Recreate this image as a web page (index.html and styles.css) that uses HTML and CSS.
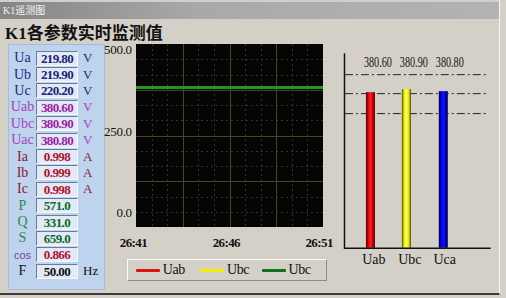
FILE: index.html
```html
<html>
<head>
<title>K1遥测图</title>
<meta charset="utf-8" />
<link rel="stylesheet" href="styles.css">
</head>
<body>
<div class="window">
<div class="titlebar">K1遥测图</div>
<h1>K1各参数实时监测值</h1>

<div class="main">

<div class="panel">
<div class="row volt"><span class="name">Ua</span><span class="val">219.80</span><span class="unit">V</span></div>
<div class="row volt"><span class="name">Ub</span><span class="val">219.90</span><span class="unit">V</span></div>
<div class="row volt"><span class="name">Uc</span><span class="val">220.20</span><span class="unit">V</span></div>
<div class="row line"><span class="name">Uab</span><span class="val">380.60</span><span class="unit">V</span></div>
<div class="row line"><span class="name">Ubc</span><span class="val">380.90</span><span class="unit">V</span></div>
<div class="row line"><span class="name">Uac</span><span class="val">380.80</span><span class="unit">V</span></div>
<div class="row amp"><span class="name">Ia</span><span class="val">0.998</span><span class="unit">A</span></div>
<div class="row amp"><span class="name">Ib</span><span class="val">0.999</span><span class="unit">A</span></div>
<div class="row amp"><span class="name">Ic</span><span class="val">0.998</span><span class="unit">A</span></div>
<div class="row power"><span class="name">P</span><span class="val">571.0</span></div>
<div class="row power"><span class="name">Q</span><span class="val">331.0</span></div>
<div class="row power"><span class="name">S</span><span class="val">659.0</span></div>
<div class="row factor"><span class="name">cos</span><span class="val">0.866</span></div>
<div class="row freq"><span class="name">F</span><span class="val">50.00</span><span class="unit">Hz</span></div>
</div>

<div class="trend">
<div class="plotrow">
<div class="yaxis"><span>500.0</span><span>250.0</span><span>0.0</span></div>
<svg class="plot" width="187" height="183" viewBox="0 0 187 183">
<rect x="0" y="0" width="187" height="183" fill="#050505"/>
<g id="grid"></g>
<line x1="0" y1="43.7" x2="187" y2="43.7" stroke="#e00000" stroke-width="2"/>
<line x1="0" y1="43.5" x2="187" y2="43.5" stroke="#e8e800" stroke-width="2"/>
<line x1="0" y1="43.6" x2="187" y2="43.6" stroke="#1f9a1f" stroke-width="3"/>
</svg>
</div>
<div class="xaxis"><span>26:41</span><span>26:46</span><span>26:51</span></div>
<div class="legend">
<span class="key"><i class="swatch red"></i>Uab</span>
<span class="key"><i class="swatch yellow"></i>Ubc</span>
<span class="key"><i class="swatch green"></i>Ubc</span>
</div>
</div>

<svg class="bars" width="160" height="226" viewBox="0 0 160 226">
<defs>
<linearGradient id="gred" x1="0" x2="1">
<stop offset="0" stop-color="#400"/><stop offset="0.25" stop-color="#d00"/><stop offset="0.5" stop-color="#f22"/><stop offset="0.8" stop-color="#b00"/><stop offset="1" stop-color="#300"/>
</linearGradient>
<linearGradient id="gyel" x1="0" x2="1">
<stop offset="0" stop-color="#440"/><stop offset="0.25" stop-color="#ee0"/><stop offset="0.5" stop-color="#ffff60"/><stop offset="0.8" stop-color="#dd0"/><stop offset="1" stop-color="#330"/>
</linearGradient>
<linearGradient id="gblu" x1="0" x2="1">
<stop offset="0" stop-color="#003"/><stop offset="0.25" stop-color="#00d"/><stop offset="0.5" stop-color="#11f"/><stop offset="0.8" stop-color="#00b"/><stop offset="1" stop-color="#002"/>
</linearGradient>
</defs>
<g stroke="#222" stroke-width="1" stroke-dasharray="8 3 2 3">
<line x1="6" y1="30.5" x2="150" y2="30.5"/>
<line x1="6" y1="49.5" x2="150" y2="49.5"/>
<line x1="6" y1="69.5" x2="150" y2="69.5"/>
</g>
<rect x="27" y="48" width="9" height="156" fill="url(#gred)"/>
<rect x="63" y="45" width="9" height="159" fill="url(#gyel)"/>
<rect x="100" y="47" width="9" height="157" fill="url(#gblu)"/>
<line x1="5.5" y1="9" x2="5.5" y2="205" stroke="#111" stroke-width="1.5"/>
<line x1="5" y1="204.5" x2="152" y2="204.5" stroke="#111" stroke-width="1.5"/>
<g class="barval">
<text x="25" y="23" textLength="28" lengthAdjust="spacingAndGlyphs">380.60</text>
<text x="61" y="23" textLength="28" lengthAdjust="spacingAndGlyphs">380.90</text>
<text x="97" y="23" textLength="28" lengthAdjust="spacingAndGlyphs">380.80</text>
</g>
<g class="barname">
<text x="35" y="220">Uab</text>
<text x="71" y="220">Ubc</text>
<text x="106" y="220">Uca</text>
</g>
</svg>

</div>
</div>

<script>
// grid of the trend plot: 12 x 12 cells, every third line solid
let grid = document.getElementById('grid');
let ns = 'http://www.w3.org/2000/svg';
for (let i = 1; i < 12; i++) {
    let solid = i % 3 == 0;
    let x = Math.round(i * 187 / 12) + 0.5;
    let y = Math.round(i * 183 / 12) + 0.5;
    let v = document.createElementNS(ns, 'line');
    v.setAttribute('x1', x); v.setAttribute('x2', x);
    v.setAttribute('y1', 0); v.setAttribute('y2', 183);
    let h = document.createElementNS(ns, 'line');
    h.setAttribute('x1', 0); h.setAttribute('x2', 187);
    h.setAttribute('y1', y); h.setAttribute('y2', y);
    for (let l of [v, h]) {
        l.setAttribute('class', solid ? 'major' : 'minor');
        grid.append(l);
    }
}
</script>
</body>
</html>
```

FILE: styles.css
```css
body {
    margin: 0;
    background-color: #d4d0c8;
    font-family: "Liberation Serif", "Noto Sans CJK SC", serif;
}

.window {
    width: 500px;
    height: 295px;
    border-right: 1px solid #f4f4f4;
    border-bottom: 2px solid #3c3c3c;
    box-sizing: border-box;
}

.titlebar {
    height: 17px;
    border-top: 2px solid #cfcfcf;
    background: linear-gradient(to right, #858585, #a9a9a9 40%, #b3b3b3);
    color: #f4f4f4;
    font-size: 10px;
    line-height: 17px;
    padding-left: 3px;
}

h1 {
    margin: 0 0 0 5px;
    height: 25px;
    padding-top: 5px;
    box-sizing: border-box;
    font-size: 17px;
    line-height: 19px;
    font-weight: bold;
    color: #111;
    font-family: "Liberation Serif", "Noto Sans CJK SC", serif;
}

.main {
    display: flex;
    align-items: flex-start;
    margin-left: 8px;
}

.panel {
    width: 97px;
    height: 246px;
    box-sizing: border-box;
    padding: 5px 0 0 1px;
    background-color: #bdd3ee;
    border: 1px solid #a7bcd8;
}

.row {
    display: flex;
    align-items: center;
    height: 16.4px;
}

.name {
    width: 25px;
    text-align: center;
    font-size: 14px;
}

.val {
    width: 40px;
    height: 13px;
    margin-left: 1px;
    background-color: #e2eaf6;
    border: 1px solid;
    border-color: #6d7b98 #f4f8ff #f4f8ff #6d7b98;
    text-align: center;
    font-size: 13px;
    line-height: 13px;
    font-weight: bold;
    letter-spacing: -0.6px;
}

.unit {
    margin-left: 5px;
    font-size: 13px;
}

.volt .name, .volt .unit { color: #1d2b78; }
.volt .val { color: #1a237a; }
.line .name, .line .unit { color: #a443bd; }
.line .val { color: #9a1d9e; }
.amp .name, .amp .unit { color: #8c1b2f; }
.amp .val { color: #b2102e; }
.power .name { color: #2c8a4a; }
.power .val { color: #0b6a2c; }
.factor .name {
    color: #7b3fa2;
    font-family: "Liberation Sans", sans-serif;
    font-size: 11px;
}
.factor .val { color: #b2102e; }
.freq .name, .freq .unit, .freq .val { color: #111; }

.trend {
    width: 228px;
    margin-left: 1px;
}

.plotrow {
    display: flex;
    gap: 4px;
}

.yaxis {
    width: 26px;
    height: 183px;
    box-sizing: border-box;
    padding-bottom: 7px;
    display: flex;
    flex-direction: column;
    justify-content: space-between;
    align-items: flex-end;
    font-size: 13px;
    line-height: 14px;
    letter-spacing: -0.3px;
    color: #111;
}

.yaxis span:first-child {
    margin-top: -1px;
}

.plot .major {
    stroke: #45451f;
    stroke-width: 1;
}

.plot .minor {
    stroke: #343418;
    stroke-width: 1;
    stroke-dasharray: 2 3;
}

.xaxis {
    display: flex;
    justify-content: space-between;
    width: 213px;
    margin: 9px 0 0 14px;
    font-size: 13px;
    line-height: 14px;
    font-weight: bold;
    letter-spacing: -0.6px;
    color: #111;
}

.legend {
    display: flex;
    align-items: center;
    width: 200px;
    height: 22px;
    box-sizing: border-box;
    margin: 9px 0 0 21px;
    padding: 0 0 0 8px;
    border: 1px solid;
    border-color: #fbfbfb #8a8a8a #8a8a8a #fbfbfb;
    font-size: 14px;
    letter-spacing: -0.5px;
    color: #111;
}

.key {
    display: flex;
    align-items: center;
    width: 71px;
}

.key:nth-child(2) {
    width: 68px;
}

.swatch {
    display: inline-block;
    width: 24px;
    height: 3px;
    margin-right: 3px;
    border-radius: 1px;
}

.swatch.red { background-color: #e01010; }
.swatch.yellow { background-color: #f2f000; }
.swatch.green { background-color: #13701c; }

.bars {
    margin-left: 6px;
}

.barval text {
    font-family: "Liberation Serif", serif;
    font-size: 14px;
    fill: #111;
}

.barname text {
    font-family: "Liberation Serif", serif;
    font-size: 14px;
    text-anchor: middle;
    fill: #111;
}
```
